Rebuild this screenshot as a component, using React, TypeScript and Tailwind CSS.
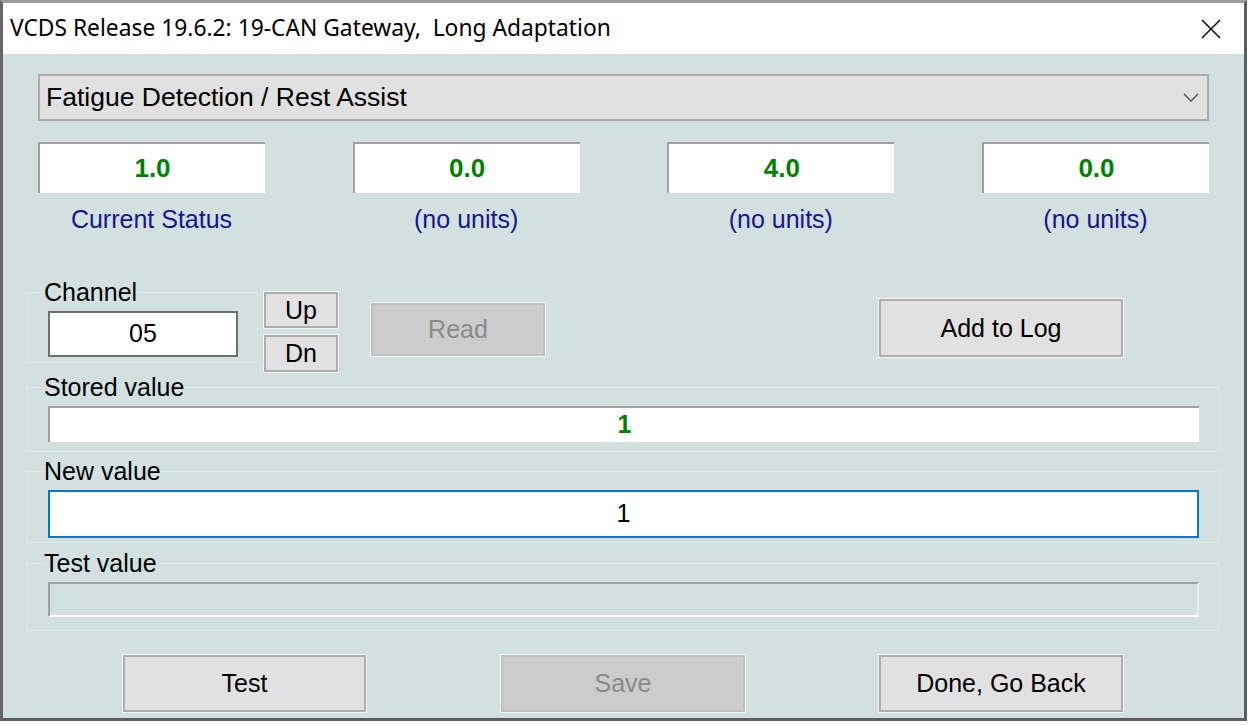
const values = [
  { value: '1.0', label: 'Current Status' },
  { value: '0.0', label: '(no units)' },
  { value: '4.0', label: '(no units)' },
  { value: '0.0', label: '(no units)' },
]

function WinButton({ label, disabled = false, className = '' }: { label: string; disabled?: boolean; className?: string }) {
  return (
    <button
      disabled={disabled}
      className={`flex items-center justify-center border-2 outline outline-[#f4f4f4] text-[25px] leading-none ${
        disabled ? 'bg-[#cccccc] border-[#bfbfbf] text-[#8a8a8a]' : 'bg-[#e1e1e1] border-[#adadad] text-black'
      } ${className}`}
    >
      {label}
    </button>
  )
}

export default function App() {
  return (
    <div className="w-[1250px] h-[726px] bg-white font-['Liberation_Sans',Arial,sans-serif]">
      <div className="w-[1247px] h-[721px] flex flex-col border-l-[3px] border-r-[3px] border-b-[3px] border-t-[3px] border-l-[#666666] border-r-[#5e5e5e] border-b-[#5e5e5e] border-t-[#9c9c9c]">
        {/* title bar */}
        <div className="h-[51px] bg-white flex items-center justify-between pl-[7px] pr-[23px]">
          <span className="font-['Noto_Sans',sans-serif] text-[22.8px] text-black whitespace-pre">
            VCDS Release 19.6.2: 19-CAN Gateway,  Long Adaptation
          </span>
          <svg width="20" height="20" viewBox="0 0 20 20">
            <path d="M1 1 L19 19 M19 1 L1 19" stroke="#111" strokeWidth="1.6" fill="none" />
          </svg>
        </div>

        {/* body */}
        <div className="flex-1 bg-[#d2e0e0] flex flex-col">
          {/* dropdown */}
          <div className="mt-[20px] ml-[35px] w-[1171px] h-[47px] bg-[#e1e1e1] border-2 border-[#ababab] flex items-center justify-between pl-[6px] pr-[8px]">
            <span className="text-[26.5px] text-black">Fatigue Detection / Rest Assist</span>
            <svg width="16" height="9" viewBox="0 0 16 9">
              <path d="M1 1 L8 8 L15 1" stroke="#555" strokeWidth="1.5" fill="none" />
            </svg>
          </div>

          {/* readouts */}
          <div className="mt-[21px] ml-[35px] w-[1171px] flex justify-between">
            {values.map((v, i) => (
              <div key={i} className="flex flex-col items-center">
                <div className="w-[227px] h-[51px] bg-white border-t-2 border-l-2 border-[#a0a0a0] flex items-center justify-center">
                  <span className="text-[26px] font-bold text-[#008000]">{v.value}</span>
                </div>
                <span className="mt-[12px] text-[25px] leading-[28px] text-[#16168e]">{v.label}</span>
              </div>
            ))}
          </div>

          {/* channel row */}
          <div className="mt-[45px] ml-[23px] flex items-start">
            <fieldset className="w-[232px] border border-[#dfe7e7] p-0">
              <legend className="ml-[17px] text-[25px] leading-[28px] text-black">Channel</legend>
              <div className="pl-[21px] pt-[5px] pb-[5px]">
                <div className="w-[190px] h-[46px] bg-white border-2 border-[#707070] flex items-center justify-center text-[25px]">
                  05
                </div>
              </div>
            </fieldset>
            <div className="ml-[6px] mt-[14px] flex flex-col">
              <WinButton label="Up" className="w-[74px] h-[36px]" />
              <WinButton label="Dn" className="w-[74px] h-[37px] mt-[7px]" />
            </div>
            <WinButton label="Read" disabled className="ml-[33px] mt-[25px] w-[174px] h-[53px]" />
            <WinButton label="Add to Log" className="ml-[334px] mt-[21px] w-[244px] h-[58px]" />
          </div>

          {/* stored value */}
          <fieldset className="mt-[1px] ml-[23px] w-[1193px] border border-[#dfe7e7] p-0">
            <legend className="ml-[17px] text-[25px] leading-[28px] text-black">Stored value</legend>
            <div className="pl-[21px] pt-[5px] pb-[9px]">
              <div className="w-[1151px] h-[36px] bg-white border-t-2 border-l-2 border-[#a0a0a0] flex items-center justify-center">
                <span className="text-[25px] font-bold text-[#008000]">1</span>
              </div>
            </div>
          </fieldset>

          {/* new value */}
          <fieldset className="mt-[5px] ml-[23px] w-[1193px] border border-[#dfe7e7] p-0">
            <legend className="ml-[17px] text-[25px] leading-[28px] text-black">New value</legend>
            <div className="pl-[21px] pt-[5px] pb-[4px]">
              <div className="w-[1151px] h-[48px] bg-white border-2 border-[#0078d7] flex items-center justify-center">
                <span className="text-[25px] text-black">1</span>
              </div>
            </div>
          </fieldset>

          {/* test value */}
          <fieldset className="mt-[6px] ml-[23px] w-[1193px] border border-[#dfe7e7] p-0">
            <legend className="ml-[17px] text-[25px] leading-[28px] text-black">Test value</legend>
            <div className="pl-[21px] pt-[5px] pb-[13px]">
              <div className="w-[1151px] h-[35px] bg-[#d2e0e0] border-2 border-t-[#a0a0a0] border-l-[#a0a0a0] border-b-white border-r-[#e8eeee]" />
            </div>
          </fieldset>

          {/* bottom buttons */}
          <div className="mt-[24px] flex">
            <WinButton label="Test" className="ml-[120px] w-[243px] h-[57px]" />
            <WinButton label="Save" disabled className="ml-[135px] w-[244px] h-[57px]" />
            <WinButton label="Done, Go Back" className="ml-[134px] w-[244px] h-[57px]" />
          </div>
        </div>
      </div>
    </div>
  )
}
